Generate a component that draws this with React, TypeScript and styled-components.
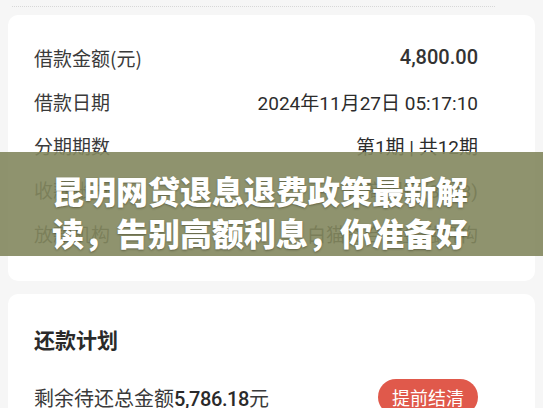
import styled, { createGlobalStyle } from "styled-components";

const GlobalStyle = createGlobalStyle`
  html, body {
    margin: 0;
    padding: 0;
    background: #f6f6f6;
  }
  body {
    font-family: "Noto Sans CJK SC", "Noto Sans", sans-serif;
    color: #333;
  }
`;

const Page = styled.div`
  position: relative;
  width: 543px;
  height: 408px;
  overflow: hidden;
  background: #f6f6f6;
  padding: 6px 8px 0;
  box-sizing: border-box;
`;

const TopRule = styled.div`
  height: 0;
  margin: 0 40px 0 4px;
  border-top: 1px dotted #d8d8d8;
`;

const Card = styled.section<{ $top: number; $padTop: number }>`
  background: #fff;
  border-radius: 10px;
  margin-top: ${(p) => p.$top}px;
  padding: ${(p) => p.$padTop}px 57px 26px 26px;
`;

const Row = styled.div`
  display: flex;
  justify-content: space-between;
  align-items: center;
  height: 44px;
`;

const Label = styled.span`
  font-size: 19px;
  color: #3a3a3a;
`;

const Value = styled.span<{ $strong?: boolean }>`
  font-family: Roboto, "Noto Sans CJK SC", sans-serif;
  font-size: ${(p) => (p.$strong ? 20 : 19)}px;
  font-weight: ${(p) => (p.$strong ? 500 : 400)};
  color: ${(p) => (p.$strong ? "#333" : "#2c2c2c")};
`;

const SectionTitle = styled.h2`
  margin: 0 0 23px;
  font-size: 21px;
  font-weight: 700;
  color: #2a2a2a;
  line-height: 26px;
`;

const Summary = styled.div`
  font-size: 20px;
  color: #3a3a3a;
  b {
    font-family: Roboto, "Noto Sans CJK SC", sans-serif;
    font-weight: 500;
    color: #2a2a2a;
    letter-spacing: -0.4px;
  }
`;

const ClearButton = styled.button`
  width: 100px;
  height: 36px;
  border: none;
  border-radius: 18px;
  background: #e0594b;
  color: #fff;
  font-family: inherit;
  font-size: 18px;
`;

const Banner = styled.div`
  position: absolute;
  left: 0;
  right: 0;
  top: 152px;
  height: 104px;
  overflow: hidden;
  background: rgba(131, 135, 94, 0.9);
  padding: 17px 40px 0 52px;
  box-sizing: border-box;
`;

const BannerTitle = styled.h1`
  margin: 0;
  font-size: 32px;
  line-height: 42px;
  font-weight: 900;
  color: #fff;
  text-shadow: 0 1px 2px rgba(40, 40, 20, 0.45);
`;

const rows = [
  { label: "借款金额(元)", value: "4,800.00", strong: true },
  { label: "借款日期", value: "2024年11月27日 05:17:10" },
  { label: "分期期数", value: "第1期 | 共12期" },
  { label: "收款账户", value: "招商银行(8823)" },
  { label: "放款机构", value: "白猫贷合作金融机构" },
];

export default function App() {
  return (
    <>
      <GlobalStyle />
      <Page>
        <TopRule />
        <Card $top={8} $padTop={20}>
          {rows.map((r) => (
            <Row key={r.label}>
              <Label>{r.label}</Label>
              <Value $strong={r.strong}>{r.value}</Value>
            </Row>
          ))}
        </Card>
        <Card $top={13} $padTop={32}>
          <SectionTitle>还款计划</SectionTitle>
          <Row>
            <Summary>
              剩余待还总金额<b>5,786.18</b>元
            </Summary>
            <ClearButton>提前结清</ClearButton>
          </Row>
        </Card>
        <Banner>
          <BannerTitle>
            昆明网贷退息退费政策最新解
            <br />
            读，告别高额利息，你准备好
          </BannerTitle>
        </Banner>
      </Page>
    </>
  );
}
